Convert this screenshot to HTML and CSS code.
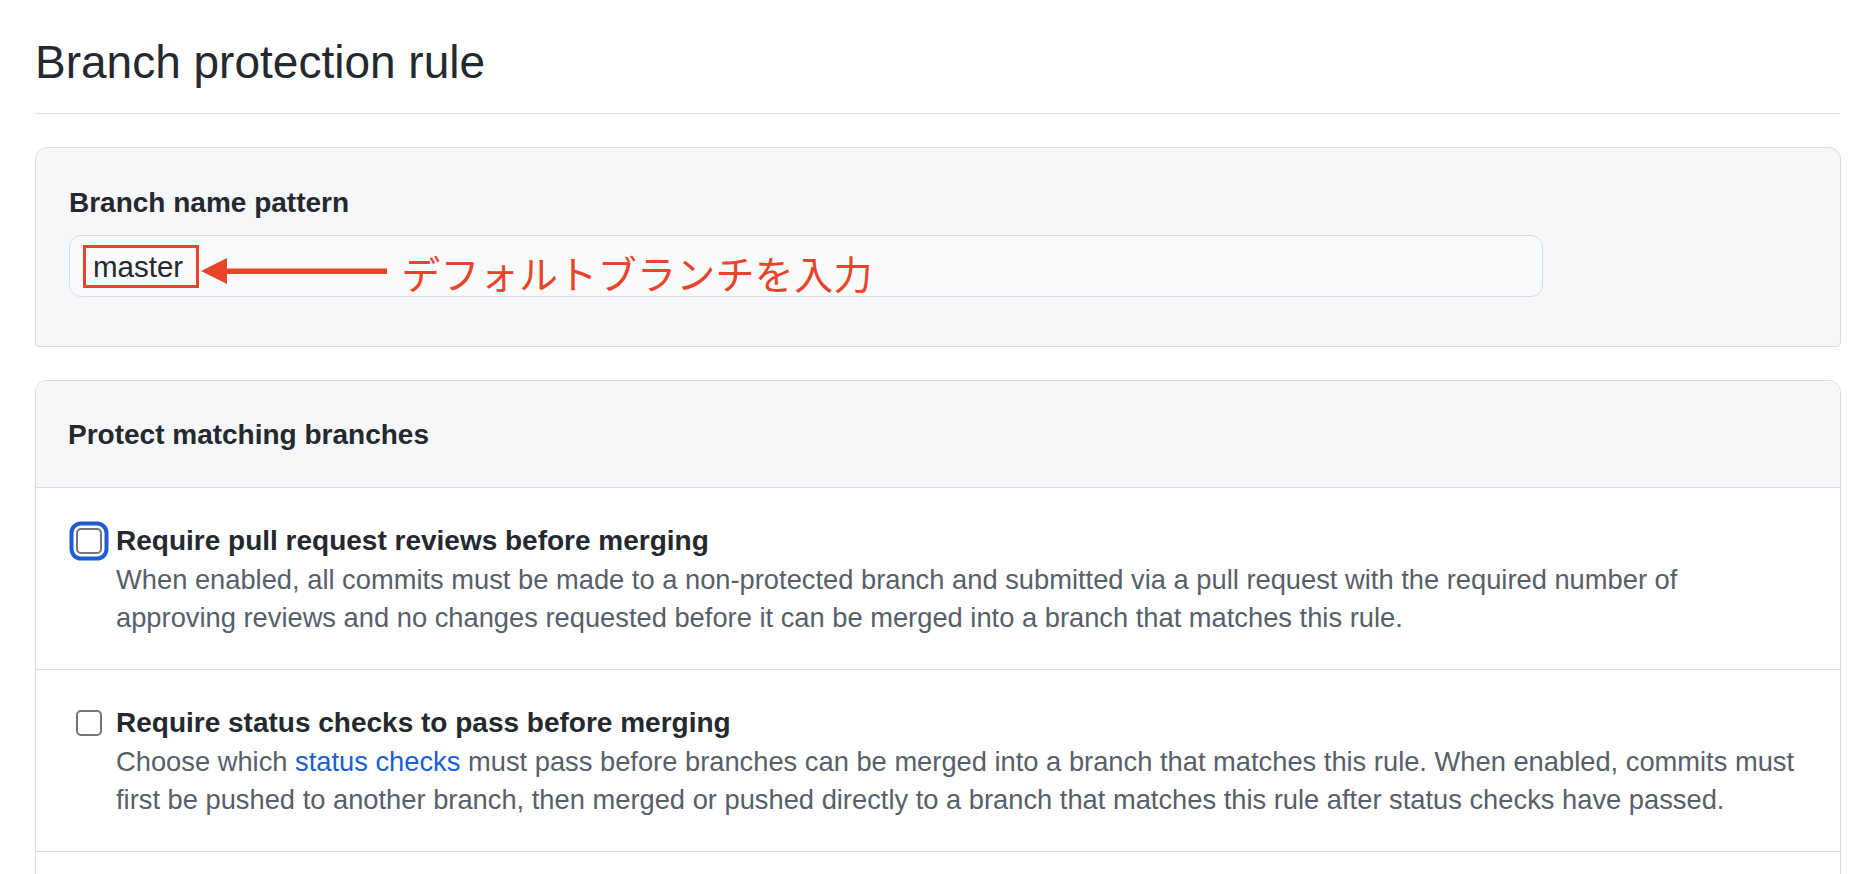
FILE: index.html
```html
<!DOCTYPE html>
<html lang="ja">
<head>
<meta charset="utf-8">
<title>Branch protection rule</title>
<link rel="stylesheet" href="styles.css">
</head>
<body>
<main class="page">
  <h1 class="page-title">Branch protection rule</h1>

  <section class="box box-pattern">
    <label class="field-label">Branch name pattern</label>
    <div class="text-input">
      <span class="highlight">master</span>
      <svg class="arrow" width="186" height="26" viewBox="0 0 186 26" aria-hidden="true">
        <polygon points="0,13 26,0 26,26" fill="#e8442a"/>
        <rect x="24" y="10.5" width="162" height="5.5" fill="#e8442a"/>
      </svg>
      <span class="note">デフォルトブランチを入力</span>
    </div>
  </section>

  <section class="box box-rules">
    <div class="box-header">Protect matching branches</div>
    <div class="rule">
      <span class="checkbox is-focused"></span>
      <div class="rule-body">
        <div class="rule-title">Require pull request reviews before merging</div>
        <p class="rule-desc">When enabled, all commits must be made to a non-protected branch and submitted via a pull request with the required number of approving reviews and no changes requested before it can be merged into a branch that matches this rule.</p>
      </div>
    </div>
    <div class="rule">
      <span class="checkbox"></span>
      <div class="rule-body">
        <div class="rule-title">Require status checks to pass before merging</div>
        <p class="rule-desc">Choose which <a class="link" href="#">status checks</a> must pass before branches can be merged into a branch that matches this rule. When enabled, commits must first be pushed to another branch, then merged or pushed directly to a branch that matches this rule after status checks have passed.</p>
      </div>
    </div>
    <div class="rule">
      <span class="checkbox"></span>
      <div class="rule-body">
        <div class="rule-title">Require signed commits</div>
        <p class="rule-desc">Commits pushed to matching branches must have verified signatures.</p>
      </div>
    </div>
  </section>
</main>
</body>
</html>
```

FILE: styles.css
```css
html, body {
  margin: 0;
  padding: 0;
  background: #ffffff;
  overflow: hidden;
}

body {
  font-family: "Liberation Sans", Arial, "Noto Sans CJK JP", sans-serif;
  color: #24292f;
}

.page {
  padding: 34px 17px 0 35px;
}

.page-title {
  margin: 0;
  font-size: 46px;
  line-height: 56px;
  font-weight: 400;
  padding-bottom: 23px;
  border-bottom: 1px solid #dfe3e8;
}

.box {
  border: 1px solid #d8dde3;
  border-radius: 12px;
  background: #f6f7f9;
}

.box-pattern {
  margin-top: 33px;
  padding: 37px 297px 49px 33px;
  border-radius: 12px 12px 4px 4px;
}

.field-label {
  display: block;
  font-size: 28px;
  line-height: 36px;
  font-weight: 700;
  margin-bottom: 14px;
}

.text-input {
  display: flex;
  align-items: center;
  height: 60px;
  border: 1px solid #d9dde3;
  border-radius: 12px;
  background: #f9fafb;
  padding-left: 13px;
}

.highlight {
  display: inline-block;
  border: 3px solid #e8442a;
  padding: 0 13px 0 7px;
  font-size: 29.5px;
  line-height: 37px;
  color: #24292f;
}

.arrow {
  display: block;
  margin-left: 2px;
  margin-top: 10px;
}

.note {
  margin-left: 14px;
  margin-top: 12px;
  font-family: "Noto Sans CJK JP", sans-serif;
  font-size: 39px;
  line-height: 44px;
  color: #e8442a;
  letter-spacing: 0.3px;
}

.box-rules {
  margin-top: 33px;
  background: #ffffff;
  overflow: hidden;
}

.box-header {
  background: #f6f7f9;
  padding: 36px 32px 34px;
  font-size: 28px;
  line-height: 36px;
  font-weight: 700;
  border-bottom: 1px solid #d8dde3;
}

.rule {
  display: flex;
  align-items: flex-start;
  padding: 35px 38px 32px 40px;
  border-bottom: 1px solid #d8dde3;
}

.checkbox {
  flex: none;
  box-sizing: border-box;
  width: 26px;
  height: 26px;
  margin-top: 5px;
  border: 2px solid #737579;
  border-radius: 5px;
  background: #ffffff;
}

.checkbox.is-focused {
  box-shadow: 0 0 0 2.5px #ffffff, 0 0 0 6.5px #1f5bd2;
  border-radius: 5px;
}

.rule-body {
  margin-left: 14px;
  flex: 1;
}

.rule-title {
  font-size: 28px;
  line-height: 36px;
  font-weight: 700;
  color: #24292f;
}

.rule-desc {
  margin: 2px 0 0;
  font-size: 27.3px;
  line-height: 38px;
  color: #57606a;
}

.link {
  color: #1a5fd4;
  text-decoration: none;
}
```
